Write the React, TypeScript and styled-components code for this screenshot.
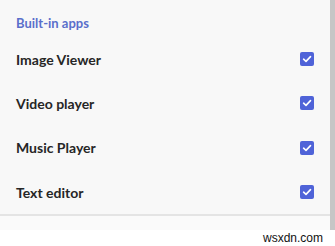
import styled, { createGlobalStyle } from "styled-components";

const GlobalStyle = createGlobalStyle`
    body {
        margin: 0;
        background: #ffffff;
        font-family: "Lato", "Noto Sans", sans-serif;
    }
`;

const apps = ["Image Viewer", "Video player", "Music Player", "Text editor"];

const CheckBox = () => (
    <Box>
        <svg width="10" height="10" viewBox="0 0 10 10">
            <path
                d="M1.6 5.2 L4 7.4 L8.5 2.6"
                fill="none"
                stroke="#ffffff"
                strokeWidth="1.6"
                strokeLinecap="round"
                strokeLinejoin="round"
            />
        </svg>
    </Box>
);

const App = () => {
    return (
        <>
            <GlobalStyle />
            <Page>
                <Panel>
                    <Title>Built-in apps</Title>
                    <List>
                        {apps.map((name) => (
                            <Row key={name}>
                                <Label>{name}</Label>
                                <CheckBox />
                            </Row>
                        ))}
                    </List>
                    <Footer />
                </Panel>
                <Watermark>wsxdn.com</Watermark>
            </Page>
        </>
    );
};

const Page = styled.div`
    width: 335px;
    height: 246px;
    overflow: hidden;
`;

const Panel = styled.section`
    width: 330px;
    background: #f8f8f8;
    border-right: 5px solid #c6c6c6;
`;

const Title = styled.div`
    padding: 15px 16px 0;
    height: 21px;
    font-size: 13px;
    font-weight: 700;
    color: #5a6fcb;
    line-height: 16px;
`;

const List = styled.div`
    display: flex;
    flex-direction: column;
    padding-top: 1px;
`;

const Row = styled.div`
    display: flex;
    align-items: center;
    justify-content: space-between;
    height: 44.3px;
    padding: 0 16px 0 16px;
`;

const Label = styled.span`
    font-size: 14px;
    font-weight: 700;
    color: #262626;
`;

const Box = styled.span`
    display: flex;
    align-items: center;
    justify-content: center;
    width: 14px;
    height: 14px;
    border-radius: 2px;
    background: #4f63d8;
`;

const Footer = styled.div`
    height: 14px;
    border-top: 2px solid #e4e4e4;
    background: #fafafa;
`;

const Watermark = styled.div`
    padding-right: 12px;
    text-align: right;
    font-family: "Liberation Sans", Arial, sans-serif;
    font-size: 12px;
    line-height: 16px;
    color: #111111;
`;

export default App;
